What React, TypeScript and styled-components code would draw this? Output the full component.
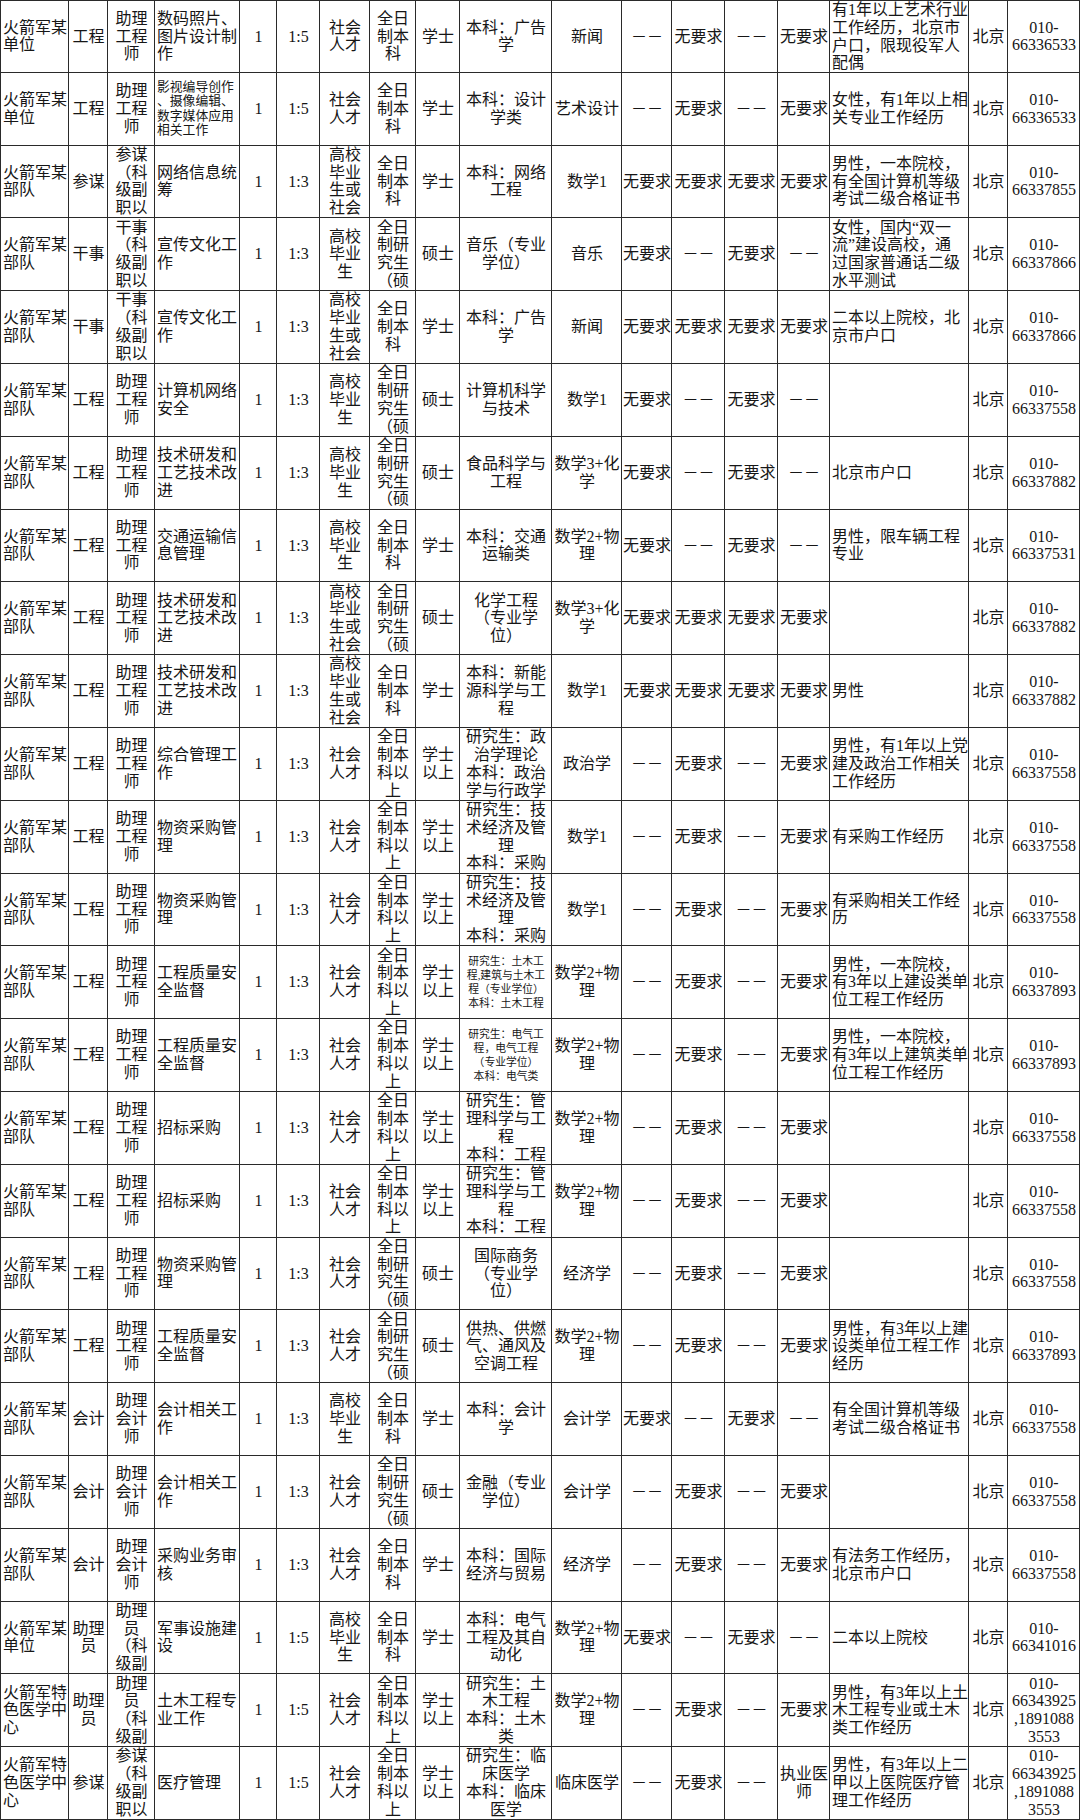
import styled, { createGlobalStyle } from "styled-components";

const GlobalStyle = createGlobalStyle`
  html, body {
    margin: 0;
    padding: 0;
    background: #ffffff;
  }
  body {
    width: 1080px;
    height: 1820px;
    overflow: hidden;
    font-family: "Liberation Serif", "Noto Sans CJK SC", serif;
    color: #161616;
  }
`;

type Align = "left" | "center";

interface Column {
  w: number;
  align: Align;
}

const columns: Column[] = [
  { w: 68, align: "left" },
  { w: 39, align: "center" },
  { w: 47, align: "center" },
  { w: 85, align: "left" },
  { w: 37, align: "center" },
  { w: 43, align: "center" },
  { w: 50, align: "center" },
  { w: 46, align: "center" },
  { w: 44, align: "center" },
  { w: 92, align: "center" },
  { w: 70, align: "center" },
  { w: 50, align: "center" },
  { w: 53, align: "center" },
  { w: 53, align: "center" },
  { w: 52, align: "center" },
  { w: 139, align: "left" },
  { w: 39, align: "center" },
  { w: 72, align: "center" },
];

const ROW_HEIGHT = 1820 / 25;

// a cell is plain text, or text with its own size
type CellData = string | { text: string; size?: number; lh?: number };

const D = "－－";
const W = "无要求";
const BU = "火箭军某\n部队";
const DW = "火箭军某\n单位";
const TS = "火箭军特\n色医学中\n心";
const ZG = "助理\n工程\n师";
const ZK = "助理\n会计\n师";
const SR = "社会\n人才";
const GB = "高校\n毕业\n生";
const GH = "高校\n毕业\n生或\n社会";
const BK = "全日\n制本\n科";
const BY = "全日\n制本\n科以\n上";
const YJ = "全日\n制研\n究生\n（硕";
const KJ = "（科\n级副\n职以";

const rows: CellData[][] = [
  [DW, "工程", ZG, "数码照片、\n图片设计制\n作", "1", "1:5", SR, BK, "学士", "本科：广告\n学", "新闻", D, W, D, W, "有1年以上艺术行业\n工作经历，北京市\n户口，限现役军人\n配偶", "北京", "010-\n66336533"],
  [DW, "工程", ZG, { text: "影视编导创作\n、摄像编辑、\n数字媒体应用\n相关工作", size: 12.8, lh: 14.5 }, "1", "1:5", SR, BK, "学士", "本科：设计\n学类", "艺术设计", D, W, D, W, "女性，有1年以上相\n关专业工作经历", "北京", "010-\n66336533"],
  [BU, "参谋", "参谋\n" + KJ, "网络信息统\n筹", "1", "1:3", GH, BK, "学士", "本科：网络\n工程", "数学1", W, W, W, W, "男性，一本院校，\n有全国计算机等级\n考试二级合格证书", "北京", "010-\n66337855"],
  [BU, "干事", "干事\n" + KJ, "宣传文化工\n作", "1", "1:3", GB, YJ, "硕士", "音乐（专业\n学位）", "音乐", W, D, W, D, "女性，国内“双一\n流”建设高校，通\n过国家普通话二级\n水平测试", "北京", "010-\n66337866"],
  [BU, "干事", "干事\n" + KJ, "宣传文化工\n作", "1", "1:3", GH, BK, "学士", "本科：广告\n学", "新闻", W, W, W, W, "二本以上院校，北\n京市户口", "北京", "010-\n66337866"],
  [BU, "工程", ZG, "计算机网络\n安全", "1", "1:3", GB, YJ, "硕士", "计算机科学\n与技术", "数学1", W, D, W, D, "", "北京", "010-\n66337558"],
  [BU, "工程", ZG, "技术研发和\n工艺技术改\n进", "1", "1:3", GB, YJ, "硕士", "食品科学与\n工程", "数学3+化\n学", W, D, W, D, "北京市户口", "北京", "010-\n66337882"],
  [BU, "工程", ZG, "交通运输信\n息管理", "1", "1:3", GB, BK, "学士", "本科：交通\n运输类", "数学2+物\n理", W, D, W, D, "男性，限车辆工程\n专业", "北京", "010-\n66337531"],
  [BU, "工程", ZG, "技术研发和\n工艺技术改\n进", "1", "1:3", GH, YJ, "硕士", "化学工程\n（专业学\n位）", "数学3+化\n学", W, W, W, W, "", "北京", "010-\n66337882"],
  [BU, "工程", ZG, "技术研发和\n工艺技术改\n进", "1", "1:3", GH, BK, "学士", "本科：新能\n源科学与工\n程", "数学1", W, W, W, W, "男性", "北京", "010-\n66337882"],
  [BU, "工程", ZG, "综合管理工\n作", "1", "1:3", SR, BY, "学士\n以上", "研究生：政\n治学理论\n本科：政治\n学与行政学", "政治学", D, W, D, W, "男性，有1年以上党\n建及政治工作相关\n工作经历", "北京", "010-\n66337558"],
  [BU, "工程", ZG, "物资采购管\n理", "1", "1:3", SR, BY, "学士\n以上", "研究生：技\n术经济及管\n理\n本科：采购", "数学1", D, W, D, W, "有采购工作经历", "北京", "010-\n66337558"],
  [BU, "工程", ZG, "物资采购管\n理", "1", "1:3", SR, BY, "学士\n以上", "研究生：技\n术经济及管\n理\n本科：采购", "数学1", D, W, D, W, "有采购相关工作经\n历", "北京", "010-\n66337558"],
  [BU, "工程", ZG, "工程质量安\n全监督", "1", "1:3", SR, BY, "学士\n以上", { text: "研究生：土木工\n程,建筑与土木工\n程（专业学位）\n本科：土木工程", size: 10.8, lh: 14 }, "数学2+物\n理", D, W, D, W, "男性，一本院校，\n有3年以上建设类单\n位工程工作经历", "北京", "010-\n66337893"],
  [BU, "工程", ZG, "工程质量安\n全监督", "1", "1:3", SR, BY, "学士\n以上", { text: "研究生：电气工\n程，电气工程\n（专业学位）\n本科：电气类", size: 10.8, lh: 14 }, "数学2+物\n理", D, W, D, W, "男性，一本院校，\n有3年以上建筑类单\n位工程工作经历", "北京", "010-\n66337893"],
  [BU, "工程", ZG, "招标采购", "1", "1:3", SR, BY, "学士\n以上", "研究生：管\n理科学与工\n程\n本科：工程", "数学2+物\n理", D, W, D, W, "", "北京", "010-\n66337558"],
  [BU, "工程", ZG, "招标采购", "1", "1:3", SR, BY, "学士\n以上", "研究生：管\n理科学与工\n程\n本科：工程", "数学2+物\n理", D, W, D, W, "", "北京", "010-\n66337558"],
  [BU, "工程", ZG, "物资采购管\n理", "1", "1:3", SR, YJ, "硕士", "国际商务\n（专业学\n位）", "经济学", D, W, D, W, "", "北京", "010-\n66337558"],
  [BU, "工程", ZG, "工程质量安\n全监督", "1", "1:3", SR, YJ, "硕士", "供热、供燃\n气、通风及\n空调工程", "数学2+物\n理", D, W, D, W, "男性，有3年以上建\n设类单位工程工作\n经历", "北京", "010-\n66337893"],
  [BU, "会计", ZK, "会计相关工\n作", "1", "1:3", GB, BK, "学士", "本科：会计\n学", "会计学", W, D, W, D, "有全国计算机等级\n考试二级合格证书", "北京", "010-\n66337558"],
  [BU, "会计", ZK, "会计相关工\n作", "1", "1:3", SR, YJ, "硕士", "金融（专业\n学位）", "会计学", D, W, D, W, "", "北京", "010-\n66337558"],
  [BU, "会计", ZK, "采购业务审\n核", "1", "1:3", SR, BK, "学士", "本科：国际\n经济与贸易", "经济学", D, W, D, W, "有法务工作经历，\n北京市户口", "北京", "010-\n66337558"],
  [DW, "助理\n员", "助理\n员\n（科\n级副", "军事设施建\n设", "1", "1:5", GB, BK, "学士", "本科：电气\n工程及其自\n动化", "数学2+物\n理", W, D, W, D, "二本以上院校", "北京", "010-\n66341016"],
  [TS, "助理\n员", "助理\n员\n（科\n级副", "土木工程专\n业工作", "1", "1:5", SR, BY, "学士\n以上", "研究生：土\n木工程\n本科：土木\n类", "数学2+物\n理", D, W, D, W, "男性，有3年以上土\n木工程专业或土木\n类工作经历", "北京", "010-\n66343925\n,1891088\n3553"],
  [TS, "参谋", "参谋\n" + KJ, "医疗管理", "1", "1:5", SR, BY, "学士\n以上", "研究生：临\n床医学\n本科：临床\n医学", "临床医学", D, W, D, "执业医\n师", "男性，有3年以上二\n甲以上医院医疗管\n理工作经历", "北京", "010-\n66343925\n,1891088\n3553"],
];

const Table = styled.div`
  display: flex;
  flex-direction: column;
  width: 1080px;
  box-sizing: border-box;
  border-left: 1px solid #2a2a2a;
  border-top: 1px solid #2a2a2a;
`;

const Row = styled.div<{ $height: number }>`
  display: grid;
  grid-template-columns: ${columns.map((c) => `${c.w}px`).join(" ")};
  height: ${(p) => p.$height}px;
`;

const Cell = styled.div<{ $align: Align }>`
  display: flex;
  flex-direction: column;
  justify-content: safe center;
  align-items: ${(p) => (p.$align === "left" ? "flex-start" : "center")};
  text-align: ${(p) => p.$align};
  box-sizing: border-box;
  border-right: 1px solid #2a2a2a;
  border-bottom: 1px solid #2a2a2a;
  padding: 0 1px 0 2px;
  overflow: hidden;
  font-size: 16px;
  line-height: 17.8px;
`;

const Line = styled.span<{ $size?: number; $lh?: number }>`
  display: block;
  white-space: nowrap;
  font-size: ${(p) => (p.$size ? `${p.$size}px` : "inherit")};
  line-height: ${(p) => (p.$lh ? `${p.$lh}px` : "inherit")};
`;

function CellContent({ data }: { data: CellData }) {
  const opts = typeof data === "string" ? { text: data } : data;
  if (!opts.text) return null;
  return (
    <>
      {opts.text.split("\n").map((line, i) => (
        <Line key={i} $size={opts.size} $lh={opts.lh}>
          {line}
        </Line>
      ))}
    </>
  );
}

export default function App() {
  return (
    <>
      <GlobalStyle />
      <Table>
        {rows.map((row, r) => (
          <Row key={r} $height={r === 0 ? ROW_HEIGHT - 1 : ROW_HEIGHT}>
            {row.map((cell, c) => (
              <Cell key={c} $align={columns[c].align}>
                <CellContent data={cell} />
              </Cell>
            ))}
          </Row>
        ))}
      </Table>
    </>
  );
}
